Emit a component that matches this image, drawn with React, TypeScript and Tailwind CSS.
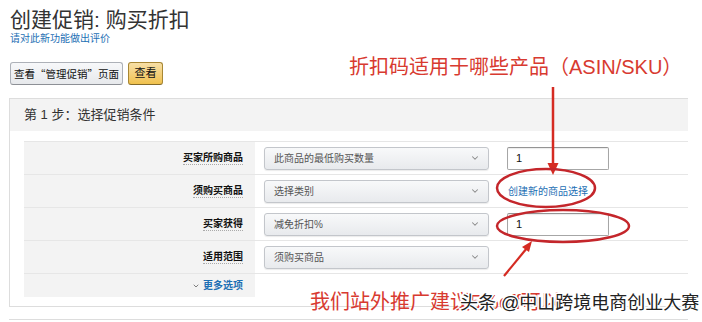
import { ChevronDown } from 'lucide-react';

const cjk = "font-['Liberation_Sans','Noto_Sans_CJK_SC',sans-serif]";

function Select({ value }: { value: string }) {
  return (
    <div className="flex h-[23px] w-[225px] items-center justify-between rounded-[3px] border border-[#c3c6cb] bg-linear-to-b from-[#f8f9fa] to-[#e8eaed] pl-[9px] pr-[8px] text-[10px] text-[#555] shadow-[0_1px_1px_rgba(0,0,0,0.08)]">
      <span>{value}</span>
      <ChevronDown size={10} strokeWidth={2.5} className="text-[#888]" />
    </div>
  );
}

function QtyInput() {
  return (
    <div className="flex h-[23px] w-[102px] items-center rounded-[2px] border border-[#a6a6a6] border-t-[#949494] bg-white pl-[8px] text-[11px] text-[#111] shadow-[inset_0_1px_1px_rgba(0,0,0,0.08)]">
      1
    </div>
  );
}

function Row({ label, children }: { label: string; children?: React.ReactNode }) {
  return (
    <div className="flex h-[33px] border-t border-[#e6e6e6]">
      <div className="flex w-[231px] items-center justify-end bg-[#f3f3f3] pr-[12px]">
        <span className="border-b border-dotted border-[#aaa] text-[10px] font-bold leading-[13px] text-[#111]">{label}</span>
      </div>
      <div className="flex flex-1 items-center gap-[18px] pl-[9px]">{children}</div>
    </div>
  );
}

export default function App() {
  return (
    <div className={`relative h-[322px] w-[702px] overflow-hidden bg-white ${cjk}`}>
      {/* 页面正文 */}
      <div className="pl-[9px] pt-[7px]">
        <div className="pl-[1px] text-[21px] leading-[26px] text-[#333]">创建促销: 购买折扣</div>
        <div className="pl-[1px] text-[10px] leading-[12px] text-[#1d6fb4]">请对此新功能做出评价</div>

        <div className="mt-[17px] flex gap-[5px] pl-[1px]">
          <button className="h-[23px] w-[113px] rounded-[3px] border border-[#adb1b8] border-b-[#8d9096] bg-linear-to-b from-[#f7f8fa] to-[#e7e9ec] font-['Noto_Sans_CJK_SC',sans-serif] text-[10.5px] text-[#111]">
            查看“管理促销”页面
          </button>
          <button className="h-[23px] w-[35px] rounded-[3px] border border-[#a88734] border-b-[#846a29] bg-linear-to-b from-[#f7dfa5] to-[#f0c14b] text-[11px] text-[#111]">
            查看
          </button>
        </div>

        {/* 第 1 步 面板 */}
        <div className="mt-[13px] w-[679px] border border-[#dddddd] border-r-0">
          <div className="flex h-[32px] items-center bg-[#f3f3f3] pl-[14px] text-[13px] text-[#333]">
            第 1 步：选择促销条件
          </div>
          <div className="ml-[14px] mt-[10px] mb-[9px]">
            <Row label="买家所购商品">
              <Select value="此商品的最低购买数量" />
              <QtyInput />
            </Row>
            <Row label="须购买商品">
              <Select value="选择类别" />
              <span className="ml-[1px] text-[10px] text-[#1d6fb4]">创建新的商品选择</span>
            </Row>
            <Row label="买家获得">
              <Select value="减免折扣%" />
              <QtyInput />
            </Row>
            <Row label="适用范围">
              <Select value="须购买商品" />
            </Row>
            <div className="flex h-[24px] border-t border-[#e6e6e6]">
              <div className="flex w-[231px] items-center justify-end gap-[3px] bg-[#f3f3f3] pr-[12px]">
                <ChevronDown size={8} strokeWidth={2.5} className="text-[#666]" />
                <span className="text-[10px] font-bold text-[#1d6fb4]">更多选项</span>
              </div>
              <div className="flex-1" />
            </div>
          </div>
        </div>
        <div className="mt-[12px] w-[679px] border-t border-[#dddddd]" />
      </div>

      {/* 标注 */}
      <svg className="pointer-events-none absolute left-0 top-0" width="702" height="322" viewBox="0 0 702 322">
        <path d="M553 87 L553 165" stroke="#d52b22" strokeWidth="2.5" fill="none" />
        <path d="M547.5 163 L558.5 163 L553 175 Z" fill="#d52b22" />
        <ellipse cx="546" cy="188" rx="49" ry="19" stroke="#c4262b" strokeWidth="2.5" fill="none" />
        <ellipse cx="563" cy="226" rx="66" ry="16" stroke="#c4262b" strokeWidth="2.5" fill="none" />
        <path d="M504 276 L527 248" stroke="#d52b22" strokeWidth="2.2" fill="none" />
        <path d="M522 247 L532 241 L529 252 Z" fill="#d52b22" />
      </svg>

      <div className="absolute left-[349px] top-[54px] whitespace-nowrap text-[20px] leading-[26px] text-[#d83a30]">
        折扣码适用于哪些产品（ASIN/SKU）
      </div>
      <div className="absolute left-[310px] top-[289px] whitespace-nowrap text-[20px] leading-[26px] text-[#d83a30]">
        我们站外推广建议5%off可以
      </div>
      <div className="absolute left-[460px] top-[291px] whitespace-nowrap text-[18px] leading-[24px] text-[#222] [paint-order:stroke_fill] [-webkit-text-stroke:3px_#ffffff]">
        头条 @中山跨境电商创业大赛
      </div>
    </div>
  );
}
